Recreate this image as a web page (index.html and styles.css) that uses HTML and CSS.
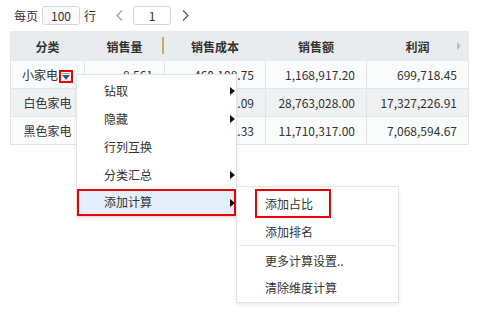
FILE: index.html
```html
<!DOCTYPE html>
<html lang="zh">
<head>
<meta charset="utf-8">
<link rel="stylesheet" href="styles.css">
</head>
<body>
<div class="page">
  <div class="toolbar">
    <span class="lbl">每页</span>
    <span class="box box-size">100</span>
    <span class="lbl">行</span>
    <span class="nav prev"><svg width="7" height="11" viewBox="0 0 7 11"><path d="M6 0.5 L1 5.5 L6 10.5" fill="none" stroke="#a0a0a0" stroke-width="1.2"/></svg></span>
    <span class="box box-page">1</span>
    <span class="nav next"><svg width="7" height="11" viewBox="0 0 7 11"><path d="M1 0.5 L6 5.5 L1 10.5" fill="none" stroke="#555" stroke-width="1.2"/></svg></span>
  </div>

  <table class="grid">
    <colgroup>
      <col class="c1"><col class="c2"><col class="c3"><col class="c4"><col class="c5">
    </colgroup>
    <thead>
      <tr>
        <th>分类</th>
        <th class="resize">销售量<span class="handle"></span></th>
        <th>销售成本</th>
        <th>销售额</th>
        <th class="last">利润<span class="more"></span></th>
      </tr>
    </thead>
    <tbody>
      <tr class="odd">
        <td class="cat"><span>小家电</span><span class="dd"><svg width="10" height="8" viewBox="0 0 10 8"><rect x="1" y="0" width="8" height="1" fill="#8aa0b8"/><path d="M1 2 L9 2 L5 7 Z" fill="#3e5874"/></svg></span></td>
        <td>8,561</td>
        <td>460,108.75</td>
        <td>1,168,917.20</td>
        <td>699,718.45</td>
      </tr>
      <tr class="even">
        <td class="cat">白色家电</td>
        <td>246,312</td>
        <td>11,435,801.09</td>
        <td>28,763,028.00</td>
        <td>17,327,226.91</td>
      </tr>
      <tr class="odd">
        <td class="cat">黑色家电</td>
        <td>97,514</td>
        <td>4,641,722.33</td>
        <td>11,710,317.00</td>
        <td>7,068,594.67</td>
      </tr>
    </tbody>
  </table>

  <div class="menu main-menu">
    <div class="item sub">钻取</div>
    <div class="item sub">隐藏</div>
    <div class="item">行列互换</div>
    <div class="item sub">分类汇总</div>
    <div class="item sub active mark">添加计算</div>
  </div>

  <div class="menu sub-menu">
    <div class="item"><span class="mark-text">添加占比</span></div>
    <div class="item">添加排名</div>
    <div class="sep"></div>
    <div class="item">更多计算设置..</div>
    <div class="item">清除维度计算</div>
  </div>
</div>
</body>
</html>
```

FILE: styles.css
```css
* { box-sizing: border-box; }
html, body { margin: 0; padding: 0; background: #fff; }
body {
  font-family: "Noto Sans CJK SC", "Noto Sans", sans-serif;
  font-size: 12px;
  color: #333;
  width: 493px;
  height: 315px;
  overflow: hidden;
}
.page { position: relative; width: 493px; height: 315px; }

.toolbar {
  display: flex;
  align-items: center;
  height: 31px;
  padding: 0 0 0 14px;
}
.lbl { line-height: 19px; }
.box {
  display: inline-flex;
  align-items: center;
  justify-content: center;
  height: 19px;
  border: 1px solid #d6d6d6;
  border-radius: 3px;
  background: #fff;
  line-height: 1;
}
.box-size { width: 38px; margin: 0 4px 0 4px; background: #fafafa; }
.box-page { width: 38px; }
.nav { display: inline-flex; align-items: center; height: 19px; }
.prev { margin: 0 10px 0 20px; }
.next { margin: 0 0 0 11px; }

.grid {
  margin-left: 10px;
  width: 457px;
  border-collapse: collapse;
  table-layout: fixed;
}
.c1 { width: 74px; }
.c2 { width: 80px; }
.c3 { width: 101px; }
.c4 { width: 101px; }
.c5 { width: 102px; }

.grid th {
  height: 29px;
  padding: 0;
  background: #e9ecef;
  font-weight: bold;
  text-align: center;
  color: #333;
  border: 1px solid #e9ecef;
  border-left: 1px solid #f4f5f7;
  position: relative;
}
.grid th:first-child { border-left-color: #e4e7ea; }
.grid td {
  height: 28px;
  padding: 0 11px 0 0;
  text-align: right;
  border: 1px solid #e2e5e8;
  white-space: nowrap;
  overflow: hidden;
}
.grid tr.odd td { background: #fafbfb; }
.grid tr.even td { background: #eff1f3; }
.grid td.cat { text-align: center; padding: 0; background: #f4f5f7; }
.grid tr.even td.cat { background: #eff1f3; }

.dd {
  display: inline-flex;
  align-items: center;
  justify-content: center;
  width: 14px;
  height: 13px;
  border: 2px solid #e00;
  vertical-align: -1px;
  margin-left: 1px;
}

.handle {
  position: absolute;
  right: 0;
  top: 5px;
  width: 2px;
  height: 17px;
  background: #c8aa66;
}
.more {
  position: absolute;
  right: 7px;
  top: 10px;
  width: 0;
  height: 0;
  border-top: 4px solid transparent;
  border-bottom: 4px solid transparent;
  border-left: 4px solid #b9bcc0;
}

.menu {
  position: absolute;
  background: #fff;
  border: 1px solid #e3e3e3;
  box-shadow: 0 2px 4px rgba(0,0,0,0.08);
}
.main-menu {
  left: 76px;
  top: 74px;
  width: 161px;
  height: 143px;
  padding: 2px 0 0 0;
}
.main-menu .item {
  height: 28px;
  line-height: 28px;
  padding-left: 27px;
  position: relative;
}
.main-menu .item:last-child { height: 27px; line-height: 26px; }
.main-menu .item.sub::after {
  content: "";
  position: absolute;
  right: 1px;
  top: 10px;
  border-top: 4px solid transparent;
  border-bottom: 4px solid transparent;
  border-left: 5px solid #111;
}
.main-menu .item.active { background: #e4effb; }
.mark { outline: 2px solid #e00; outline-offset: -2px; }

.sub-menu {
  left: 236px;
  top: 186px;
  width: 163px;
  height: 117px;
  padding: 4px 0 0 0;
}
.sub-menu .item {
  height: 27px;
  line-height: 27px;
  padding-left: 28px;
}
.sub-menu .sep {
  height: 1px;
  background: #e6e6e6;
  margin: 0 2px 1px 2px;
}
.mark-text {
  display: inline-block;
  margin-left: -10px;
  padding-left: 8px;
  width: 76px;
  height: 29px;
  line-height: 25px;
  border: 2px solid #e00;
  margin-top: -2px;
  vertical-align: top;
}
```
